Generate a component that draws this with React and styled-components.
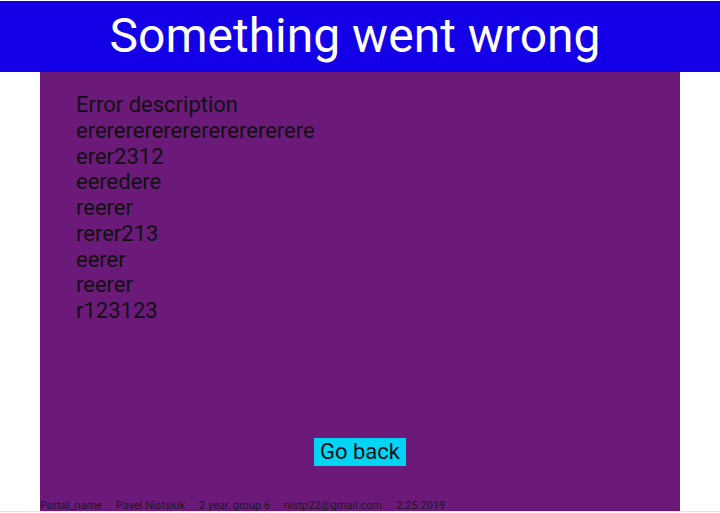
import React from "react";
import styled, { createGlobalStyle } from "styled-components";

const Global = createGlobalStyle`
  html, body { margin: 0; padding: 0; background: #ffffff; }
  body { font-family: Roboto, "Liberation Sans", sans-serif; overflow: hidden; }
`;

const Page = styled.div`
  display: flex;
  flex-direction: column;
  height: 512px;
  padding-top: 1px;
  box-sizing: border-box;
  border-bottom: 1px solid #e2e2e2;
`;

const Header = styled.header`
  background: #1400e6;
  height: 71px;
  display: flex;
  align-items: center;
  justify-content: center;
  flex-shrink: 0;
  padding-right: 10px;
`;

const Title = styled.h1`
  margin: 0;
  color: #ffffff;
  font-weight: 400;
  font-size: 48px;
  line-height: 1;
  transform: translateY(-1px);
`;

const Panel = styled.main`
  width: 640px;
  margin: 0 auto;
  flex: 1;
  background: #6b1a7a;
  display: flex;
  flex-direction: column;
`;

const Description = styled.div`
  padding: 20px 36px 0;
  flex: 1;
`;

const Line = styled.div`
  font-size: 22px;
  line-height: 25.75px;
  color: #111111;
`;

const ButtonRow = styled.div`
  display: flex;
  justify-content: center;
  padding-bottom: 31px;
`;

const BackButton = styled.button`
  background: #00d4f5;
  border: none;
  margin: 0;
  padding: 1px 6px;
  font-family: Roboto, "Liberation Sans", sans-serif;
  font-size: 22px;
  line-height: 26px;
  color: #111111;
  cursor: pointer;
`;

const Footer = styled.footer`
  display: flex;
  gap: 14px;
  font-size: 11px;
  line-height: 11px;
  color: #1a1a1a;
  padding-top: 3px;
`;

const lines = [
  "Error description",
  "erererererererererererere",
  "erer2312",
  "eeredere",
  "reerer",
  "rerer213",
  "eerer",
  "reerer",
  "r123123",
];

export default function App() {
  return (
    <>
      <Global />
      <Page>
        <Header>
          <Title>Something went wrong</Title>
        </Header>
        <Panel>
          <Description>
            {lines.map((l, i) => (
              <Line key={i}>{l}</Line>
            ))}
          </Description>
          <ButtonRow>
            <BackButton>Go back</BackButton>
          </ButtonRow>
          <Footer>
            <span>Portal_name</span>
            <span>Pavel Nistsiuk</span>
            <span>2 year, group 6</span>
            <span>nistp22@gmail.com</span>
            <span>2.25.2019</span>
          </Footer>
        </Panel>
      </Page>
    </>
  );
}
